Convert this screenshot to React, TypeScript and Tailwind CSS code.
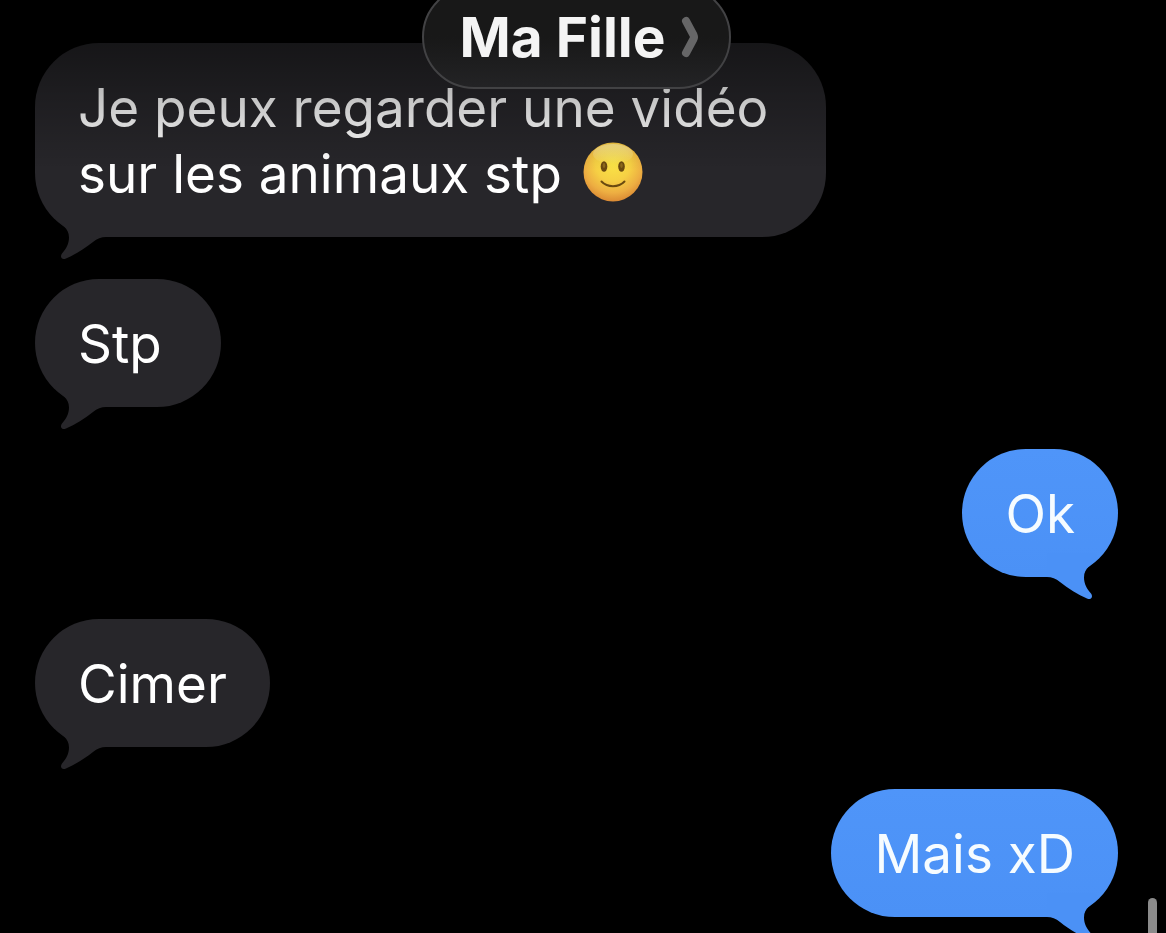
import clsx from "clsx";

type Message = {
  id: number;
  from: "me" | "them";
  text: string;
  smile?: boolean;
};

const messages: Message[] = [
  {
    id: 1,
    from: "them",
    text: "Je peux regarder une vidéo sur les animaux stp",
    smile: true,
  },
  { id: 2, from: "them", text: "Stp" },
  { id: 3, from: "me", text: "Ok" },
  { id: 4, from: "them", text: "Cimer" },
  { id: 5, from: "me", text: "Mais xD" },
];

function SmileEmoji() {
  return (
    <svg
      role="img"
      aria-label="sourire"
      viewBox="0 0 60 60"
      className="ml-1.5 inline-block size-[60px] align-[-9px]"
    >
      <defs>
        <radialGradient id="face" cx="50%" cy="36%" r="66%">
          <stop offset="0" stopColor="#fae446" />
          <stop offset="0.45" stopColor="#f6d044" />
          <stop offset="0.75" stopColor="#edae42" />
          <stop offset="1" stopColor="#d88532" />
        </radialGradient>
        <linearGradient id="shine" x1="0" y1="0" x2="0" y2="1">
          <stop offset="0" stopColor="#fff8c8" stopOpacity="0.5" />
          <stop offset="1" stopColor="#fff8c8" stopOpacity="0" />
        </linearGradient>
      </defs>
      <circle cx="30" cy="30" r="29.5" fill="url(#face)" />
      <ellipse cx="30" cy="12" rx="20" ry="10" fill="url(#shine)" />
      <ellipse cx="21" cy="24.5" rx="3.3" ry="5.2" fill="#6a4a10" />
      <ellipse cx="38.5" cy="24.5" rx="3.3" ry="5.2" fill="#6a4a10" />
      <ellipse cx="21" cy="23.5" rx="1.3" ry="2.4" fill="#8d6a1c" />
      <ellipse cx="38.5" cy="23.5" rx="1.3" ry="2.4" fill="#8d6a1c" />
      <path
        d="M18.5 39.5c6 6.200 17 6.200 23 0"
        fill="none"
        stroke="#6a4a10"
        strokeWidth="2"
        strokeLinecap="round"
      />
    </svg>
  );
}

function Tail({ mine }: { mine: boolean }) {
  return (
    <svg
      aria-hidden="true"
      viewBox="0 0 72 48"
      className={clsx(
        "absolute -bottom-6 h-12 w-[72px]",
        mine ? "right-0 -scale-x-100 fill-[#4b91f6]" : "left-0 fill-[#27262a]"
      )}
    >
      <path d="M20 5.500C26 12 34 14.500 34 24.500C34 31 31 36 27 40.500C24.500 44 27 47.500 31 45.500C40 41.500 50 35.500 58 29Q64 24 71 24V0H24Z" />
    </svg>
  );
}

function Bubble({ message }: { message: Message }) {
  const mine = message.from === "me";

  return (
    <li
      className={clsx(
        "relative max-w-[73%] rounded-[64px] px-[43px] pt-8 pb-[30px] text-[53px] leading-[66px]",
        mine
          ? "self-end bg-linear-to-b from-[#4f95f9] to-[#4b91f6] text-[#f6fcff]"
          : "min-w-[186px] self-start bg-[#27262a] text-white"
      )}
    >
      <Tail mine={mine} />
      <p className="relative">
        {message.text} {message.smile && <SmileEmoji />}
      </p>
    </li>
  );
}

export default function App() {
  return (
    <main className="relative h-screen overflow-hidden bg-black font-['Inter',sans-serif]">
      <ul className="flex flex-col gap-[42px] pt-[43px] pr-12 pl-[35px]">
        {messages.map((message) => (
          <Bubble key={message.id} message={message} />
        ))}
      </ul>

      {/* Conversation title, floating over the scrolled messages */}
      <header className="absolute inset-x-0 top-0 flex h-[170px] items-start justify-center bg-linear-to-b from-black/60 via-black/25 via-55% to-transparent pr-12 pl-[35px]">
        <button
          type="button"
          className="-mt-[15px] flex h-[104px] items-center gap-4 rounded-full border-2 border-[#424244] bg-linear-to-b from-[#181818] from-50% to-[#232325] pr-[30px] pl-9 text-[55px] font-bold text-[#f4f4f4]"
        >
          Ma Fille
          <svg
            aria-hidden="true"
            viewBox="0 0 18 42"
            className="h-[42px] w-[18px]"
          >
            <path
              d="M5 5L12.500 19Q13.500 21 12.500 23L5 37"
              fill="none"
              stroke="#666667"
              strokeWidth="8"
              strokeLinecap="round"
              strokeLinejoin="round"
            />
          </svg>
        </button>
      </header>

      <div className="absolute right-[9px] bottom-0 h-[35px] w-[9px] rounded-t-full bg-[#8b8b8b]" />
    </main>
  );
}
